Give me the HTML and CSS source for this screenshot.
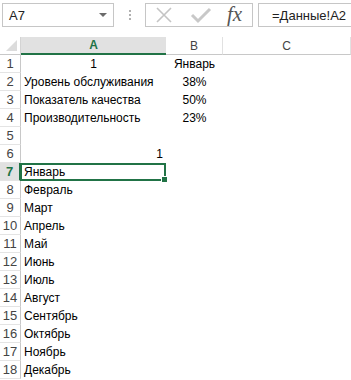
FILE: index.html
```html
<!DOCTYPE html>
<html lang="ru">
<head>
    <meta charset="UTF-8">
    <title>Лист Excel</title>
    <link rel="stylesheet" href="styles.css">
</head>
<body>
    <!-- Строка формул -->
    <div class="toolbar">
        <div class="namebox"><span>A7</span><span class="caret"></span></div>
        <div class="grip"><i></i><i></i><i></i></div>
        <div class="fx-buttons">
            <svg class="ico" width="18" height="18" viewBox="0 0 18 18">
                <path d="M2 2 L16 16 M16 2 L2 16" stroke="#c4c4c4" stroke-width="1.6" fill="none"/>
            </svg>
            <svg class="ico" width="22" height="18" viewBox="0 0 22 18">
                <path d="M2 9 L8 15 L20 3" stroke="#c8c8c8" stroke-width="3" fill="none"/>
            </svg>
            <span class="fx">fx</span>
        </div>
        <div class="formula">=Данные!A2</div>
    </div>

    <!-- Лист -->
    <div class="sheet">
        <div class="corner"></div>
        <div class="col-head active">A</div>
        <div class="col-head">B</div>
        <div class="col-head">C</div>

        <div class="row-head">1</div><div class="cell center">1</div><div class="cell center">Январь</div><div class="cell"></div>
        <div class="row-head">2</div><div class="cell">Уровень обслуживания</div><div class="cell center">38%</div><div class="cell"></div>
        <div class="row-head">3</div><div class="cell">Показатель качества</div><div class="cell center">50%</div><div class="cell"></div>
        <div class="row-head">4</div><div class="cell">Производительность</div><div class="cell center">23%</div><div class="cell"></div>
        <div class="row-head">5</div><div class="cell"></div><div class="cell"></div><div class="cell"></div>
        <div class="row-head">6</div><div class="cell right">1</div><div class="cell"></div><div class="cell"></div>
        <div class="row-head active">7</div><div class="cell selected">Январь</div><div class="cell"></div><div class="cell"></div>
        <div class="row-head">8</div><div class="cell">Февраль</div><div class="cell"></div><div class="cell"></div>
        <div class="row-head">9</div><div class="cell">Март</div><div class="cell"></div><div class="cell"></div>
        <div class="row-head">10</div><div class="cell">Апрель</div><div class="cell"></div><div class="cell"></div>
        <div class="row-head">11</div><div class="cell">Май</div><div class="cell"></div><div class="cell"></div>
        <div class="row-head">12</div><div class="cell">Июнь</div><div class="cell"></div><div class="cell"></div>
        <div class="row-head">13</div><div class="cell">Июль</div><div class="cell"></div><div class="cell"></div>
        <div class="row-head">14</div><div class="cell">Август</div><div class="cell"></div><div class="cell"></div>
        <div class="row-head">15</div><div class="cell">Сентябрь</div><div class="cell"></div><div class="cell"></div>
        <div class="row-head">16</div><div class="cell">Октябрь</div><div class="cell"></div><div class="cell"></div>
        <div class="row-head">17</div><div class="cell">Ноябрь</div><div class="cell"></div><div class="cell"></div>
        <div class="row-head">18</div><div class="cell">Декабрь</div><div class="cell"></div><div class="cell"></div>
    </div>
</body>
</html>
```

FILE: styles.css
```css
/* Общие */
body {
    margin: 0;
    background: #fff;
    font-family: "Liberation Sans", Arial, sans-serif;
    color: #000;
    overflow: hidden;
}

/* Строка формул */
.toolbar {
    display: flex;
    align-items: center;
    height: 24px;
    padding: 3px 0 0 2px;
}

.namebox {
    box-sizing: border-box;
    width: 112px;
    height: 24px;
    border: 1px solid #c6c6c6;
    display: flex;
    align-items: center;
    justify-content: space-between;
    padding: 0 6px 0 6px;
    font-size: 13px;
    color: #222;
}

.caret {
    width: 0;
    height: 0;
    border-left: 4px solid transparent;
    border-right: 4px solid transparent;
    border-top: 4px solid #6b6b6b;
}

.grip {
    width: 31px;
    display: flex;
    flex-direction: column;
    align-items: center;
    gap: 2px;
}

.grip i {
    width: 2px;
    height: 2px;
    background: #b0b0b0;
}

.fx-buttons {
    box-sizing: border-box;
    width: 108px;
    height: 24px;
    border: 1px solid #c6c6c6;
    display: flex;
    align-items: center;
    padding-left: 9px;
    gap: 17px;
}

.fx {
    font-family: "Liberation Serif", serif;
    font-style: italic;
    font-size: 21px;
    color: #555;
    margin-left: -2px;
    margin-top: -2px;
}

.formula {
    box-sizing: border-box;
    flex: 1;
    height: 24px;
    margin-left: 5px;
    border: 1px solid #c6c6c6;
    border-right: none;
    padding-left: 13px;
    display: flex;
    align-items: center;
    font-size: 13px;
    color: #222;
}

/* Лист */
.sheet {
    margin-top: 10px;
    display: grid;
    grid-template-columns: 21px 145px 57px 1fr;
    grid-auto-rows: 18px;
}

.corner {
    position: relative;
    box-sizing: border-box;
    border-right: 1px solid #d4d4d4;
    border-bottom: 1px solid #c8c8c8;
}

.corner::after {
    content: "";
    position: absolute;
    right: 3px;
    bottom: 3px;
    width: 0;
    height: 0;
    border-left: 11px solid transparent;
    border-bottom: 11px solid #dcdcdc;
}

.col-head {
    box-sizing: border-box;
    display: flex;
    align-items: center;
    justify-content: center;
    font-size: 12px;
    color: #444;
    border-right: 1px solid #e1e1e1;
    border-bottom: 1px solid #c8c8c8;
}

.col-head.active {
    background: #e1e1e1;
    color: #217346;
    font-weight: bold;
    border-bottom: 2px solid #217346;
    border-right: none;
}

.row-head {
    box-sizing: border-box;
    display: flex;
    align-items: center;
    justify-content: center;
    font-size: 13px;
    color: #444;
    border-right: 1px solid #c8c8c8;
    border-bottom: 1px solid #e4e4e4;
}

.row-head.active {
    background: #e1e1e1;
    color: #217346;
    font-weight: bold;
    border-right: 2px solid #217346;
}

.cell {
    display: flex;
    align-items: center;
    padding: 0 3px;
    font-size: 12px;
    white-space: nowrap;
}

.cell.center {
    justify-content: center;
}

.cell.right {
    justify-content: flex-end;
}

.cell.selected {
    position: relative;
    box-sizing: border-box;
    border: 2px solid #217346;
    margin-left: -1px;
    padding-left: 2px;
}

.cell.selected::after {
    content: "";
    position: absolute;
    right: -4px;
    bottom: -4px;
    width: 5px;
    height: 5px;
    background: #217346;
    border: 1px solid #fff;
}
```
